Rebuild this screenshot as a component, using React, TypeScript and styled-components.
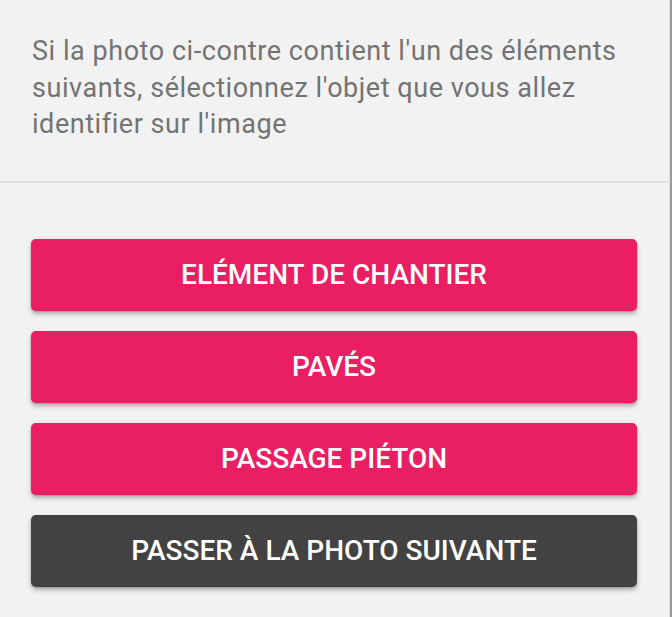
import React from 'react';
import styled, { createGlobalStyle } from 'styled-components';

const GlobalStyle = createGlobalStyle`
  html, body {
    margin: 0;
    padding: 0;
    background: #f2f2f2;
  }
  body {
    font-family: Roboto, 'Noto Sans', sans-serif;
  }
`;

const Page = styled.div`
  display: flex;
  width: 672px;
  height: 617px;
  overflow: hidden;
  background: #f2f2f2;
`;

const Panel = styled.div`
  flex: 1;
  display: flex;
  flex-direction: column;
  border-right: 1px solid #e2e2e2;
`;

const ScrollEdge = styled.div`
  width: 2px;
  background: #9a9a9a;
`;

const Header = styled.div`
  padding: 33px 32px 38px 32px;
  border-bottom: 2px solid #e0e0e0;
`;

const Instructions = styled.p`
  margin: 0;
  font-size: 27px;
  font-weight: 400;
  letter-spacing: 0.55px;
  line-height: 36.5px;
  color: #737373;
`;

const Choices = styled.div`
  display: flex;
  flex-direction: column;
  gap: 20px;
  padding: 56px 32px 0 31px;
`;

interface ChoiceButtonProps {
  $skip?: boolean;
}

const ChoiceButton = styled.button<ChoiceButtonProps>`
  height: 72px;
  border: none;
  border-radius: 5px;
  background-color: ${({ $skip }) => ($skip ? '#424242' : '#e91e63')};
  color: #fff;
  font-family: Roboto, 'Noto Sans', sans-serif;
  font-size: 28px;
  font-weight: 500;
  text-transform: uppercase;
  box-shadow: 0 3px 5px rgba(0, 0, 0, 0.28), 0 1px 2px rgba(0, 0, 0, 0.15);
  cursor: pointer;
`;

const options = ['Elément de chantier', 'Pavés', 'Passage piéton'];

const App: React.FC = () => {
  return (
    <>
      <GlobalStyle />
      <Page>
        <Panel>
          <Header>
            <Instructions>
              Si la photo ci-contre contient l'un des éléments suivants, sélectionnez l'objet que
              vous allez identifier sur l'image
            </Instructions>
          </Header>
          <Choices>
            {options.map((label) => (
              <ChoiceButton key={label}>{label}</ChoiceButton>
            ))}
            <ChoiceButton $skip>Passer à la photo suivante</ChoiceButton>
          </Choices>
        </Panel>
        <ScrollEdge />
      </Page>
    </>
  );
};

export default App;
